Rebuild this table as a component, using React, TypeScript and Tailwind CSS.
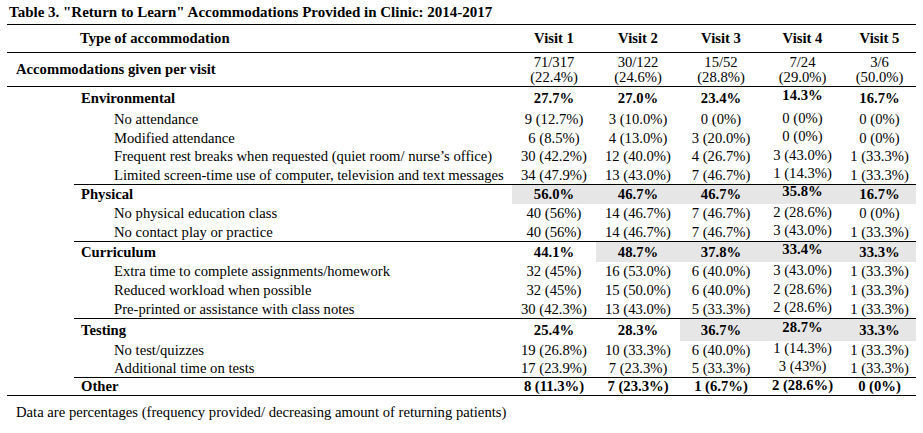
const colW = ["w-[84px]", "w-[84px]", "w-[82px]", "w-[81px]", "w-[73px]"];

type Sub = { label: string; values: string[]; h: string };
type Section = {
  name: string;
  totals: string[];
  shadeFrom: number | null;
  rowH: string;
  items: Sub[];
};

const sections: Section[] = [
  {
    name: "Environmental",
    totals: ["27.7%", "27.0%", "23.4%", "14.3%", "16.7%"],
    shadeFrom: null,
    rowH: "h-[23px]",
    items: [
      { label: "No attendance", h: "h-[19px]", values: ["9 (12.7%)", "3 (10.0%)", "0 (0%)", "0 (0%)", "0 (0%)"] },
      { label: "Modified attendance", h: "h-[18px]", values: ["6 (8.5%)", "4 (13.0%)", "3 (20.0%)", "0 (0%)", "0 (0%)"] },
      {
        label: "Frequent rest breaks when requested (quiet room/ nurse\u2019s office)",
        h: "h-[19px]",
        values: ["30 (42.2%)", "12 (40.0%)", "4 (26.7%)", "3 (43.0%)", "1 (33.3%)"],
      },
      {
        label: "Limited screen-time use of computer, television and text messages",
        h: "h-[18px]",
        values: ["34 (47.9%)", "13 (43.0%)", "7 (46.7%)", "1 (14.3%)", "1 (33.3%)"],
      },
    ],
  },
  {
    name: "Physical",
    totals: ["56.0%", "46.7%", "46.7%", "35.8%", "16.7%"],
    shadeFrom: 0,
    rowH: "h-[19px]",
    items: [
      {
        label: "No physical education class",
        h: "h-[19px]",
        values: ["40 (56%)", "14 (46.7%)", "7 (46.7%)", "2 (28.6%)", "0 (0%)"],
      },
      {
        label: "No contact play or practice",
        h: "h-[18px]",
        values: ["40 (56%)", "14 (46.7%)", "7 (46.7%)", "3 (43.0%)", "1 (33.3%)"],
      },
    ],
  },
  {
    name: "Curriculum",
    totals: ["44.1%", "48.7%", "37.8%", "33.4%", "33.3%"],
    shadeFrom: 1,
    rowH: "h-[20px]",
    items: [
      {
        label: "Extra time to complete assignments/homework",
        h: "h-[19px]",
        values: ["32 (45%)", "16 (53.0%)", "6 (40.0%)", "3 (43.0%)", "1 (33.3%)"],
      },
      {
        label: "Reduced workload when possible",
        h: "h-[19px]",
        values: ["32 (45%)", "15 (50.0%)", "6 (40.0%)", "2 (28.6%)", "1 (33.3%)"],
      },
      {
        label: "Pre-printed or assistance with class notes",
        h: "h-[18px]",
        values: ["30 (42.3%)", "13 (43.0%)", "5 (33.3%)", "2 (28.6%)", "1 (33.3%)"],
      },
    ],
  },
  {
    name: "Testing",
    totals: ["25.4%", "28.3%", "36.7%", "28.7%", "33.3%"],
    shadeFrom: 2,
    rowH: "h-[22px]",
    items: [
      {
        label: "No test/quizzes",
        h: "h-[18px]",
        values: ["19 (26.8%)", "10 (33.3%)", "6 (40.0%)", "1 (14.3%)", "1 (33.3%)"],
      },
      {
        label: "Additional time on tests",
        h: "h-[18px]",
        values: ["17 (23.9%)", "7 (23.3%)", "5 (33.3%)", "3 (43%)", "1 (33.3%)"],
      },
    ],
  },
];

function Cells({
  values,
  bold,
  lift,
  shadeFrom,
}: {
  values: string[];
  bold?: boolean;
  lift?: string;
  shadeFrom?: number | null;
}) {
  return (
    <>
      {values.map((v, i) => {
        const shaded = shadeFrom != null && i >= shadeFrom;
        // the Visit 4 figures sit a little higher in the original
        const pad = i === 3 ? lift ?? "" : "";
        return (
          <div
            key={i}
            className={`${colW[i]} flex shrink-0 items-center justify-center ${pad} ${
              shaded ? "bg-[#e6e6e6]" : ""
            } ${bold ? "font-bold" : ""}`}
          >
            {v}
          </div>
        );
      })}
    </>
  );
}

export default function App() {
  return (
    <div className="h-[433px] w-[923px] overflow-hidden bg-white text-black text-[14.667px] leading-[19px] font-['Liberation_Serif','Times_New_Roman',serif]">
      <div className="pl-[9px] pt-[3px] h-[24px] font-bold text-[15px]">
        Table 3. "Return to Learn" Accommodations Provided in Clinic: 2014-2017
      </div>
      <div className="ml-[7px] w-[909px] border-t border-black">
        <div className="flex h-[28px] items-center font-bold border-b border-black">
          <div className="w-[505px] shrink-0 pl-[73px]">Type of accommodation</div>
          {["Visit 1", "Visit 2", "Visit 3", "Visit 4", "Visit 5"].map((v, i) => (
            <div key={v} className={`${colW[i]} shrink-0 text-center`}>
              {v}
            </div>
          ))}
        </div>
        <div className="flex h-[34px] items-center border-b border-black">
          <div className="w-[505px] shrink-0 pl-[9px] font-bold">Accommodations given per visit</div>
          {[
            ["71/317", "(22.4%)"],
            ["30/122", "(24.6%)"],
            ["15/52", "(28.8%)"],
            ["7/24", "(29.0%)"],
            ["3/6", "(50.0%)"],
          ].map((p, i) => (
            <div key={i} className={`${colW[i]} shrink-0 text-center leading-[15px] pt-[1px]`}>
              <div>{p[0]}</div>
              <div>{p[1]}</div>
            </div>
          ))}
        </div>
        {sections.map((s, si) => (
          <div key={s.name} className={si === 0 ? "" : "ml-[67px] border-t border-black"}>
            <div className={`flex ${s.rowH}`}>
              <div
                className={`${
                  si === 0 ? "w-[505px] pl-[74px]" : "w-[438px] pl-[7px]"
                } shrink-0 flex items-center font-bold`}
              >
                {s.name}
              </div>
              <Cells values={s.totals} bold lift="pb-[6px]" shadeFrom={s.shadeFrom} />
            </div>
            {s.items.map((it) => (
              <div key={it.label} className={`flex ${it.h}`}>
                <div
                  className={`${
                    si === 0 ? "w-[505px] pl-[107px]" : "w-[438px] pl-[40px]"
                  } shrink-0 whitespace-nowrap flex items-center`}
                >
                  {it.label}
                </div>
                <Cells values={it.values} lift="pb-[3px]" />
              </div>
            ))}
          </div>
        ))}
        <div className="border-b border-black">
          <div className="ml-[67px] border-t border-black flex h-[18px]">
            <div className="w-[438px] pl-[7px] shrink-0 flex items-center font-bold">Other</div>
            <Cells values={["8 (11.3%)", "7 (23.3%)", "1 (6.7%)", "2 (28.6%)", "0 (0%)"]} bold lift="pb-[2px]" />
          </div>
        </div>
      </div>
      <div className="pl-[16px] pt-[7px]">
        Data are percentages (frequency provided/ decreasing amount of returning patients)
      </div>
    </div>
  );
}
